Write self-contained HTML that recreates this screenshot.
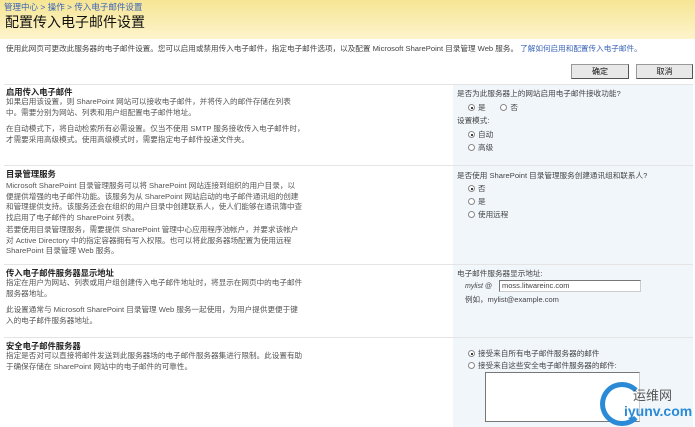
<!DOCTYPE html>
<html><head><meta charset="utf-8"><style>
*{margin:0;padding:0;box-sizing:border-box}
body{width:695px;height:427px;overflow:hidden;background:#fff;font-family:"Liberation Sans","Noto Sans CJK SC",sans-serif;font-size:7.6px;color:#444;position:relative}
.a{position:absolute;white-space:nowrap}
.hdr{position:absolute;left:0;top:0;width:695px;height:39px;background:linear-gradient(#f6e594,#fdf4cc)}
.bc{color:#3a63b8;font-size:8.5px;left:4px;top:1px}
.t{font-size:14px;color:#111;left:5px;top:12px}
.p{line-height:10.5px;color:#555}
.h{font-weight:bold;color:#222;font-size:8.3px}
.rc{position:absolute;left:453px;top:84px;width:240px;height:343px;background:#f1f6fb}
.hr{position:absolute;left:4px;width:689px;height:1px;background:#e4e4e4}
.btn{position:absolute;top:64px;height:15px;background:#e8e8e8;border:1px solid #999;border-right-color:#555;border-bottom-color:#555;font-size:8px;text-align:center;line-height:13px;color:#111}
.r{display:inline-block;width:7px;height:7px;border:1px solid #888;border-radius:50%;background:#fff;vertical-align:-1px;margin-right:3px;position:relative}
.r.on:after{content:"";position:absolute;left:1.5px;top:1.5px;width:2px;height:2px;border-radius:50%;background:#000}
</style></head><body>
<div class="hdr"></div>
<div class="a bc">管理中心 &gt; 操作 &gt; 传入电子邮件设置</div>
<div class="a t">配置传入电子邮件设置</div>
<div class="a" style="left:6px;top:43px;color:#444">使用此网页可更改此服务器的电子邮件设置。您可以启用或禁用传入电子邮件，指定电子邮件选项，以及配置 Microsoft SharePoint 目录管理 Web 服务。 <span style="color:#3a63b8">了解如何启用和配置传入电子邮件。</span></div>
<div class="btn" style="left:571px;width:58px">确定</div>
<div class="btn" style="left:636px;width:57px">取消</div>
<div class="rc"></div>
<div class="hr" style="top:84px"></div>
<div class="hr" style="top:165px"></div>
<div class="hr" style="top:264px"></div>
<div class="hr" style="top:337px"></div>

<div class="a h" style="left:6px;top:86px">启用传入电子邮件</div>
<div class="a p" style="left:6px;top:97px">如果启用该设置，则 SharePoint 网站可以接收电子邮件，并将传入的邮件存储在列表<br>中。需要分别为网站、列表和用户组配置电子邮件地址。</div>
<div class="a p" style="left:6px;top:124px">在自动模式下，将自动检索所有必需设置。仅当不使用 SMTP 服务接收传入电子邮件时，<br>才需要采用高级模式。使用高级模式时，需要指定电子邮件投递文件夹。</div>
<div class="a" style="left:457px;top:88px">是否为此服务器上的网站启用电子邮件接收功能?</div>
<div class="a" style="left:468px;top:102px"><span class="r on"></span>是 &nbsp; &nbsp; &nbsp; <span class="r"></span>否</div>
<div class="a" style="left:457px;top:115px">设置模式:</div>
<div class="a" style="left:468px;top:129px"><span class="r on"></span>自动</div>
<div class="a" style="left:468px;top:142px"><span class="r"></span>高级</div>

<div class="a h" style="left:6px;top:168px">目录管理服务</div>
<div class="a p" style="left:6px;top:181px">Microsoft SharePoint 目录管理服务可以将 SharePoint 网站连接到组织的用户目录，以<br>便提供增强的电子邮件功能。该服务为从 SharePoint 网站启动的电子邮件通讯组的创建<br>和管理提供支持。该服务还会在组织的用户目录中创建联系人，使人们能够在通讯簿中查<br>找启用了电子邮件的 SharePoint 列表。</div>
<div class="a p" style="left:6px;top:225px">若要使用目录管理服务，需要提供 SharePoint 管理中心应用程序池帐户，并要求该帐户<br>对 Active Directory 中的指定容器拥有写入权限。也可以将此服务器场配置为使用远程<br>SharePoint 目录管理 Web 服务。</div>
<div class="a" style="left:457px;top:170px">是否使用 SharePoint 目录管理服务创建通讯组和联系人?</div>
<div class="a" style="left:468px;top:183px"><span class="r on"></span>否</div>
<div class="a" style="left:468px;top:196px"><span class="r"></span>是</div>
<div class="a" style="left:468px;top:209px"><span class="r"></span>使用远程</div>

<div class="a h" style="left:6px;top:267px">传入电子邮件服务器显示地址</div>
<div class="a p" style="left:6px;top:278px">指定在用户为网站、列表或用户组创建传入电子邮件地址时，将显示在网页中的电子邮件<br>服务器地址。</div>
<div class="a p" style="left:6px;top:305px">此设置通常与 Microsoft SharePoint 目录管理 Web 服务一起使用，为用户提供更便于键<br>入的电子邮件服务器地址。</div>
<div class="a" style="left:457px;top:268px">电子邮件服务器显示地址:</div>
<div class="a" style="left:465px;top:283px;font-style:italic;font-size:7px">mylist @</div>
<div class="a" style="left:499px;top:280px;width:142px;height:12px;background:#fff;border:1px solid #777;border-right-color:#ccc;border-bottom-color:#ccc;padding-left:2px;font-size:7.5px;line-height:10px">moss.litwareinc.com</div>
<div class="a" style="left:465px;top:294px;font-size:7.5px">例如，mylist@example.com</div>

<div class="a h" style="left:6px;top:340px">安全电子邮件服务器</div>
<div class="a p" style="left:6px;top:351px">指定是否对可以直接将邮件发送到此服务器场的电子邮件服务器集进行限制。此设置有助<br>于确保存储在 SharePoint 网站中的电子邮件的可靠性。</div>
<div class="a" style="left:468px;top:348px"><span class="r on"></span>接受来自所有电子邮件服务器的邮件</div>
<div class="a" style="left:468px;top:360px"><span class="r"></span>接受来自这些安全电子邮件服务器的邮件:</div>
<div class="a" style="left:485px;top:372px;width:155px;height:50px;background:#fff;border:1px solid #777;border-right-color:#ccc"></div>
<div class="a" style="left:600px;top:382px;width:44px;height:44px;border:5px solid #2a8ad6;border-right-color:transparent;border-radius:50%"></div>
<div class="a" style="left:633px;top:385px;font-size:13px;color:#555">运维网</div>
<div class="a" style="left:624px;top:403px;font-size:14px;font-weight:bold;color:#2a8ad6">iyunv.com</div>
</body></html>
